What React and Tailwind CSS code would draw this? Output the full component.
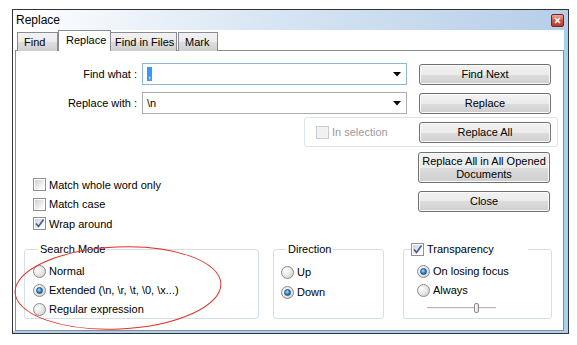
import React from "react";

const btn =
  "h-[21px] w-[132px] rounded-[3px] border border-[#707070] bg-[linear-gradient(#f2f2f2,#ebebeb_50%,#dddddd_50%,#cfcfcf)] shadow-[inset_0_0_0_1px_#fbfbfb] text-[11px] leading-[13px] text-black flex items-center justify-center whitespace-nowrap";

const Check = ({ checked, disabled }) => (
  <span
    className={`relative flex h-[13px] w-[13px] shrink-0 items-center justify-center border ${
      disabled ? "border-[#c9c9c9] bg-[#f4f4f4]" : "border-[#8e8f8f] bg-white"
    }`}
  >
    <span
      className={`h-[9px] w-[9px] ${
        disabled
          ? "bg-[#f0f0f0]"
          : "bg-[linear-gradient(135deg,#cfcfcf,#f4f4f4_70%,#ffffff)]"
      }`}
    />
    {checked && (
      <svg className="absolute left-0 top-0" width="11" height="11" viewBox="0 0 11 11">
        <path d="M2 5.5 L4.5 8.5 L9.5 1.5" fill="none" stroke="#3d5a98" strokeWidth="1.6" />
      </svg>
    )}
  </span>
);

const Radio = ({ checked }) => (
  <span className="flex h-[13px] w-[13px] shrink-0 items-center justify-center rounded-full border border-[#8b8b8b] bg-[radial-gradient(circle_at_35%_35%,#ffffff,#e4e4e4_55%,#c4c4c4)]">
    {checked && (
      <span className="h-[7px] w-[7px] rounded-full border border-[#1b4f7d] bg-[radial-gradient(circle_at_40%_35%,#a8e0fd,#2b86c8_55%,#124a7a)]" />
    )}
  </span>
);

const Opt = ({ children, h = "h-[19.5px]" }) => (
  <div className={`flex items-center gap-[3px] whitespace-nowrap ${h}`}>{children}</div>
);

const Arrow = () => (
  <svg width="8" height="5" viewBox="0 0 8 5" className="mr-[5px]">
    <path d="M0 0 H8 L4 4.5 Z" fill="#000" />
  </svg>
);

const tabOff =
  "flex h-[19px] items-center whitespace-nowrap border border-b-0 border-[#898c95] bg-[linear-gradient(#f2f2f2,#ebebeb_50%,#dddddd_50%,#cfcfcf)]";

export default function App() {
  return (
    <div
      className="relative h-[345px] w-[577px] overflow-hidden bg-white pl-[12px] pt-[9px] text-[11px] text-black"
      style={{ fontFamily: '"Liberation Sans", Arial, sans-serif' }}
    >
      <div className="flex h-[325px] w-[557px] flex-col border border-[#333333] bg-white">
        {/* title bar */}
        <div className="flex h-[20px] items-center justify-between bg-[linear-gradient(to_right,#ffffff,#d8e6f4_45%,#b6cee8)] pl-[3px] pr-[4px]">
          <span className="text-[12px] leading-none">Replace</span>
          <span className="flex h-[13px] w-[13px] items-center justify-center rounded-[2px] border border-[#6b2a22] bg-[linear-gradient(#eba899,#cf5a4c_50%,#b9382b)]">
            <svg width="7" height="7" viewBox="0 0 7 7">
              <path d="M1 1 L6 6 M6 1 L1 6" stroke="#fff" strokeWidth="1.6" />
            </svg>
          </span>
        </div>

        <div className="flex flex-1 flex-col border-b-[2px] border-r-[4px] border-[#a6d0ee] pl-[2px]">
          {/* tabs */}
          <div className="relative z-10 -mb-px flex h-[21px] items-end pl-[2px]">
            <div className={`${tabOff} w-[41px] pl-[6px]`}>Find</div>
            <div className="flex h-[21px] w-[53px] items-center border border-b-0 border-[#898c95] bg-white pb-[2px] pl-[7px]">
              Replace
            </div>
            <div className={`${tabOff} w-[66px] border-l-0 pl-[4px]`}>Find in Files</div>
            <div className={`${tabOff} ml-px w-[40px] pl-[6px]`}>Mark</div>
          </div>

          {/* panel */}
          <div className="flex-1 border border-[#898c95] bg-white pt-[12px]">
            <div className="flex items-center">
              <span className="w-[121px] text-right">Find what :</span>
              <div className="ml-[5px] flex h-[22px] w-[265px] items-center justify-between border border-[#8fb5dd] pl-[4px]">
                <span className="bg-[#3399ff] px-px leading-[14px] text-white">,</span>
                <Arrow />
              </div>
              <button className={`${btn} ml-[12px] border-[#3c7fb1] shadow-[inset_0_0_0_1px_#a9e3fb]`}>
                Find Next
              </button>
            </div>
            <div className="mt-[7px] flex items-center">
              <span className="w-[121px] text-right">Replace with :</span>
              <div className="ml-[5px] flex h-[22px] w-[265px] items-center justify-between border border-[#abadb3] pl-[4px]">
                <span>\n</span>
                <Arrow />
              </div>
              <button className={`${btn} ml-[12px]`}>Replace</button>
            </div>

            <div className="ml-[288px] mt-[3px] flex h-[30px] w-[254px] items-center rounded-[3px] border border-[#dde5eb] pl-[11px]">
              <Check disabled />
              <span className="ml-[3px] w-[85px] text-[#9a9a9a]">In selection</span>
              <button className={`${btn} ml-auto mr-[6px]`}>Replace All</button>
            </div>

            <div className="mt-[5px] flex">
              <div className="w-[402px] pl-[17px] pt-[23px]">
                <Opt>
                  <Check />
                  <span>Match whole word only</span>
                </Opt>
                <Opt>
                  <Check />
                  <span>Match case</span>
                </Opt>
                <Opt>
                  <Check checked />
                  <span>Wrap around</span>
                </Opt>
              </div>
              <div className="flex flex-col gap-[8px]">
                <button className={`${btn} h-[31px] flex-col`}>
                  <span>Replace All in All Opened</span>
                  <span>Documents</span>
                </button>
                <button className={btn}>Close</button>
              </div>
            </div>

            {/* group boxes */}
            <div className="ml-[8px] mt-[8px] flex items-start">
              <fieldset className="h-[77px] w-[235px] rounded-[3px] border border-[#d5dfe5] pl-[8px]">
                <legend className="ml-[5px] px-[2px] leading-[15px]">Search Mode</legend>
                <div className="pt-[5px]">
                  <Opt h="h-[19px]">
                    <Radio />
                    <span>Normal</span>
                  </Opt>
                  <Opt h="h-[19px]">
                    <Radio checked />
                    <span>Extended (\n, \r, \t, \0, \x...)</span>
                  </Opt>
                  <Opt h="h-[19px]">
                    <Radio />
                    <span>Regular expression</span>
                  </Opt>
                </div>
              </fieldset>

              <fieldset className="ml-[14px] h-[77px] w-[111px] rounded-[3px] border border-[#d5dfe5] pl-[7px]">
                <legend className="ml-[5px] px-[2px] leading-[15px]">Direction</legend>
                <div className="pt-[6px]">
                  <Opt h="h-[20px]">
                    <Radio />
                    <span>Up</span>
                  </Opt>
                  <Opt h="h-[20px]">
                    <Radio checked />
                    <span>Down</span>
                  </Opt>
                </div>
              </fieldset>

              <fieldset className="ml-[19px] h-[77px] w-[149px] rounded-[3px] border border-[#d5dfe5] pl-[13px]">
                <legend className="-ml-[6px] flex w-[117px] items-center gap-[3px] leading-[15px]">
                  <Check checked />
                  <span>Transparency</span>
                </legend>
                <div className="pt-[5px]">
                  <Opt h="h-[19px]">
                    <Radio checked />
                    <span>On losing focus</span>
                  </Opt>
                  <Opt h="h-[19px]">
                    <Radio />
                    <span>Always</span>
                  </Opt>
                  <div className="relative ml-[10px] mt-[3px] h-[10px] w-[69px]">
                    <div className="absolute left-0 top-[4px] h-[2px] w-[69px] border-b border-t border-b-[#f2f2f2] border-t-[#b5b5b5]" />
                    <div className="absolute left-[47px] top-0 h-[10px] w-[5px] rounded-[2px] border border-[#8a8a8a] bg-[linear-gradient(to_right,#ffffff,#dcdcdc)]" />
                  </div>
                </div>
              </fieldset>
            </div>
          </div>
        </div>
      </div>

      {/* red annotation ellipse */}
      <svg className="pointer-events-none absolute left-0 top-0" width="577" height="345">
        <ellipse
          cx="118"
          cy="288"
          rx="103"
          ry="41"
          transform="rotate(-2.5 118 288)"
          fill="none"
          stroke="#e3322b"
          strokeWidth="1"
        />
      </svg>
    </div>
  );
}
